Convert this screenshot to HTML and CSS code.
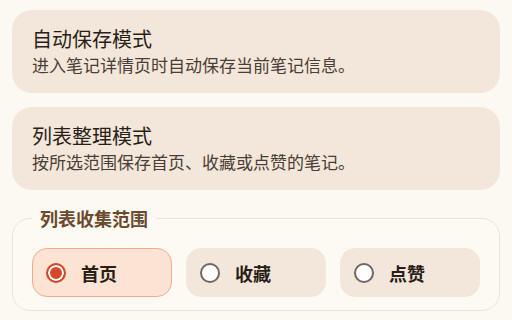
FILE: index.html
```html
<!DOCTYPE html>
<html lang="zh-CN">
<head>
    <meta charset="UTF-8">
    <meta name="viewport" content="width=device-width, initial-scale=1.0">
    <title>保存设置</title>
    <link rel="stylesheet" href="styles.css">
</head>
<body>
    <div class="container">
        <!-- Mode cards -->
        <div class="mode-card">
            <h2 class="mode-title">自动保存模式</h2>
            <p class="mode-desc">进入笔记详情页时自动保存当前笔记信息。</p>
        </div>

        <div class="mode-card">
            <h2 class="mode-title">列表整理模式</h2>
            <p class="mode-desc">按所选范围保存首页、收藏或点赞的笔记。</p>
        </div>

        <!-- Scope picker -->
        <fieldset class="scope">
            <legend>列表收集范围</legend>
            <div class="scope-options">
                <label class="option selected">
                    <span class="radio"></span>
                    <span class="option-label">首页</span>
                </label>
                <label class="option">
                    <span class="radio"></span>
                    <span class="option-label">收藏</span>
                </label>
                <label class="option">
                    <span class="radio"></span>
                    <span class="option-label">点赞</span>
                </label>
            </div>
        </fieldset>
    </div>
</body>
</html>
```

FILE: styles.css
```css
* {
    margin: 0;
    padding: 0;
    box-sizing: border-box;
    font-family: "Noto Sans CJK SC", "Noto Sans", sans-serif;
}

body {
    background-color: #fcf8f2;
    color: #2a1f17;
}

.container {
    padding: 10px 12px 0 12px;
}

.mode-card {
    background-color: #f3e6da;
    border-radius: 20px;
    padding: 16px 20px 17px 20px;
    margin-bottom: 14px;
}

.mode-title {
    font-size: 20px;
    font-weight: 400;
    line-height: 26px;
    margin-bottom: 2px;
}

.mode-desc {
    font-size: 17px;
    line-height: 22px;
    color: #4a3e35;
}

.scope {
    border: 1px solid #ece2d7;
    border-radius: 18px;
    background-color: #fdfaf4;
    padding: 18px 19px 13px 19px;
    margin-top: 16px;
}

.scope legend {
    padding: 0 8px;
    font-size: 18px;
    font-weight: 700;
    line-height: 24px;
    color: #6b4a2e;
}

.scope-options {
    display: grid;
    grid-template-columns: repeat(3, 1fr);
    gap: 14px;
}

.option {
    display: flex;
    align-items: center;
    height: 49px;
    padding-left: 13px;
    background-color: #f3e6da;
    border: 1px solid #f3e6da;
    border-radius: 15px;
}

.option.selected {
    background-color: #fde3d3;
    border-color: #f1ab8e;
}

.radio {
    width: 20px;
    height: 20px;
    border-radius: 50%;
    border: 2px solid #6f6661;
    background-color: #fff;
    margin-right: 15px;
    flex-shrink: 0;
}

.option.selected .radio {
    border-color: #d7452a;
    background-color: #d7452a;
    box-shadow: inset 0 0 0 2px #fff;
}

.option-label {
    font-size: 18px;
    font-weight: 700;
    color: #2a1f17;
}
```
